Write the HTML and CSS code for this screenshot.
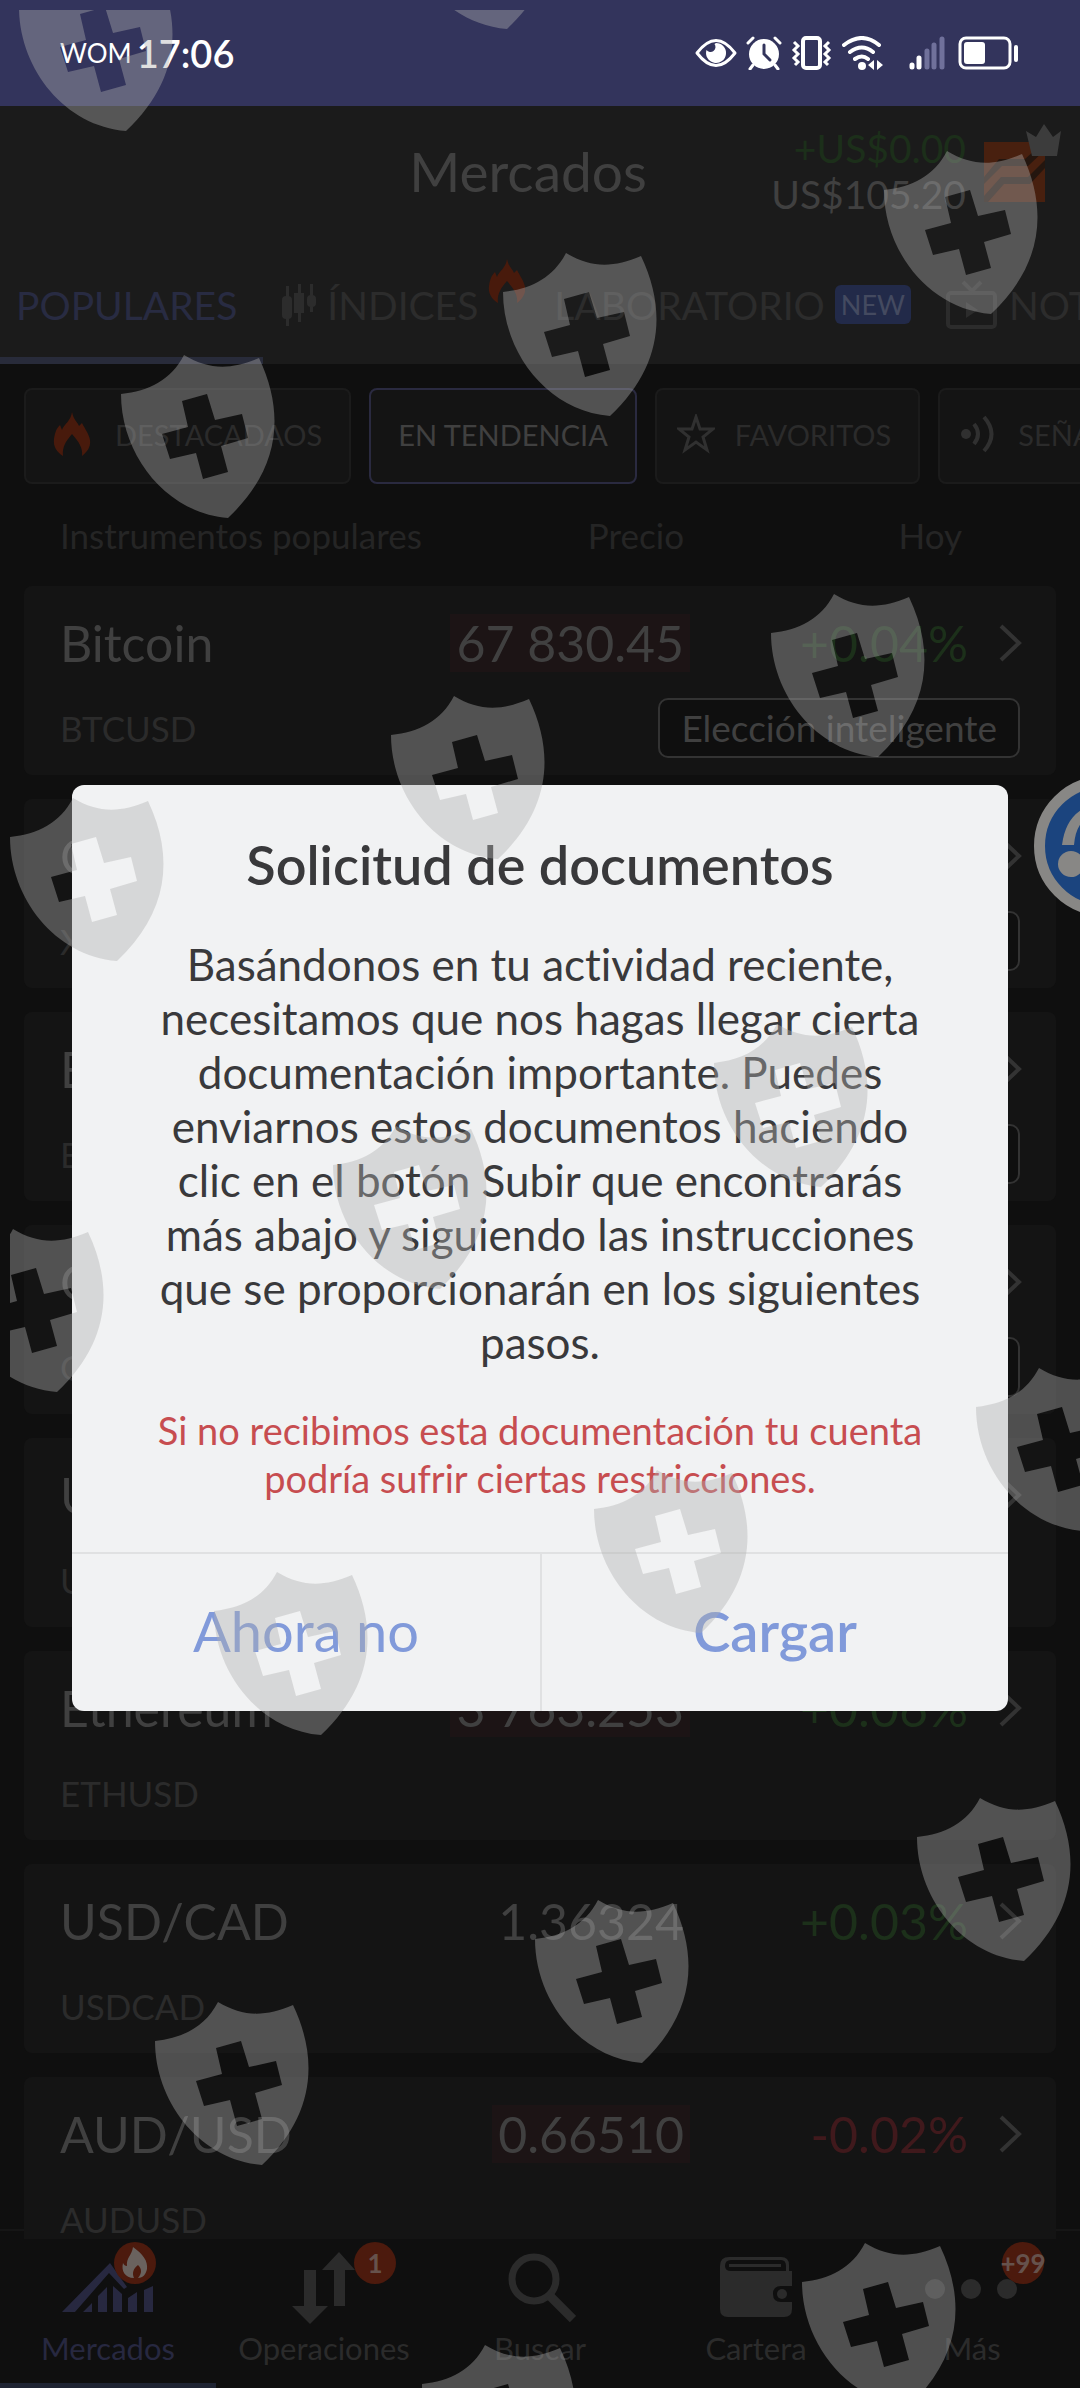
FILE: index.html
```html
<!DOCTYPE html>
<html lang="es">
<head>
    <meta charset="UTF-8">
    <meta name="viewport" content="width=device-width, initial-scale=1.0">
    <title>Mercados</title>
    <link rel="stylesheet" href="styles.css">
</head>
<body>
    <div class="status-bar">
        <span class="carrier">WOM</span>
        <span class="time">17:06</span>
        <div class="status-icons">
            <svg width="42" height="34" viewBox="0 0 42 34" fill="none" stroke="#fff" stroke-width="3">
                <path d="M2 17Q21 -8 40 17Q21 42 2 17Z" stroke-linejoin="round"/>
                <path d="M21 7a10 10 0 1 1-9.500 7a5 5 0 1 0 8-6z" fill="#fff" stroke="none"/>
            </svg>
            <svg width="36" height="34" viewBox="0 0 36 34" fill="none" stroke="#fff" stroke-width="3" stroke-linecap="round">
                <circle cx="18" cy="18" r="15" fill="#fff" stroke="none"/>
                <path d="M2 7l5-5M34 7l-5-5M7 29l-3 4M29 29l3 4"/>
                <path d="M18 9v9l6 6" stroke="#33345c"/>
            </svg>
            <svg width="42" height="34" viewBox="0 0 42 34" fill="none" stroke="#fff" stroke-width="3">
                <rect x="12" y="2" width="17" height="30" rx="3" stroke-width="4"/>
                <path d="M3 6l4 4-4 4 4 4-4 4 4 4-3 3M38 6l-4 4 4 4-4 4 4 4-4 4 3 3"/>
            </svg>
            <svg width="42" height="34" viewBox="0 0 42 34" fill="none" stroke="#fff" stroke-width="4" stroke-linecap="round">
                <path d="M2 9Q20 -5 37 9M8 16Q20 7 31 16M13 23Q20 18 26 23"/>
                <circle cx="20" cy="30" r="4" fill="#fff" stroke="none"/>
                <path d="M32 24v10l-6-5zM35 24l6 5-6 5z" fill="#fff" stroke="none"/>
            </svg>
            <svg class="signal" width="36" height="34" viewBox="0 0 36 34" fill="none" stroke="#fff" stroke-width="5" stroke-linecap="round">
                <path d="M3 29v2M10 22v9"/>
                <path d="M18 15v16M25 9v22M33 3v28" stroke="#70719b"/>
            </svg>
            <svg width="60" height="34" viewBox="0 0 60 34">
                <rect x="2" y="2" width="50" height="30" rx="6" fill="none" stroke="#fff" stroke-width="3"/>
                <rect x="6" y="6" width="21" height="22" rx="3" fill="#fff"/>
                <rect x="56" y="9" width="4" height="17" rx="2" fill="#fff"/>
            </svg>
        </div>
    </div>

    <header>
        <div class="top">
            <h1>Mercados</h1>
            <div class="account">
                <div>
                    <p class="profit">+US$0.00</p>
                    <p class="balance">US$105.20</p>
                </div>
                <svg class="logo" width="72" height="80" viewBox="0 0 72 80">
                    <path d="M0 18h61v60H0z" fill="#48200f"/>
                    <path d="M0 53l15-18h26l20-18v9L44 42H18L0 60zM0 72l17-19h27l17-17v8L46 60H20L4 78H0z" fill="#24160f"/>
                    <path d="M42 7l10 6 8-13 9 13 8-6-4 25H48z" fill="#3c3c3c"/>
                </svg>
            </div>
        </div>
        <nav class="tabs">
            <a href="#" class="tab active">POPULARES</a>
            <a href="#" class="tab">
                <svg width="36" height="42" viewBox="0 0 36 42" fill="#2c2c2c">
                    <path d="M5 2h3v40H5zM17 0h3v38h-3zM29 0h3v28h-3z"/>
                    <rect x="1" y="12" width="10" height="23" rx="4"/><rect x="13" y="9" width="10" height="20"/><rect x="26" y="11" width="9" height="12" rx="4"/>
                </svg>
                ÍNDICES
                <svg class="tab-fire" width="38" height="46" viewBox="0 0 38 46"><use href="#fire"/></svg>
            </a>
            <a href="#" class="tab">LABORATORIO <span class="new">NEW</span></a>
            <a href="#" class="tab">
                <svg width="54" height="50" viewBox="0 0 54 50" fill="none" stroke="#2c2c2c" stroke-width="4">
                    <rect x="3" y="13" width="47" height="34" rx="3"/>
                    <path d="M18 2l9 9 9-9"/><path d="M21 22l12 8-12 8z" fill="#2c2c2c" stroke="none"/>
                </svg>
                NOTICIAS
            </a>
        </nav>
    </header>

    <main>
        <div class="chips">
            <button class="chip">
                <svg width="38" height="46" viewBox="0 0 38 46"><use href="#fire"/></svg>
                DESTACADAOS
            </button>
            <button class="chip selected">EN TENDENCIA</button>
            <button class="chip outline">
                <svg width="38" height="40" viewBox="0 0 38 40" fill="none" stroke="#303030" stroke-width="3">
                    <path d="M19 3l4 12h13l-10 8 4 13-11-8-11 8 4-13-10-8h13z"/>
                </svg>
                FAVORITOS
            </button>
            <button class="chip outline">
                <svg width="38" height="40" viewBox="0 0 38 40" fill="none" stroke="#303030" stroke-width="4">
                    <circle cx="6" cy="20" r="5" fill="#303030" stroke="none"/>
                    <path d="M14 10q8 10 0 20M24 3q15 17 0 34"/>
                </svg>
                SEÑALES
            </button>
        </div>

        <table class="instruments">
            <thead>
                <tr><th class="col-name">Instrumentos populares</th><th>Precio</th><th>Hoy</th></tr>
            </thead>
            <tbody>
                <tr>
                    <td class="name">Bitcoin</td><td class="price"><span class="down">67 830.45</span></td><td class="change up">+0.04%</td>
                    <td class="arrow"><svg width="26" height="38"><use href="#chevron"/></svg></td>
                    <td class="code">BTCUSD</td><td class="pick"><span>Elección inteligente</span></td>
                </tr>
                <tr>
                    <td class="name">Oro</td><td class="price"></td><td class="change"></td>
                    <td class="arrow"><svg width="26" height="38"><use href="#chevron"/></svg></td>
                    <td class="code">XAUUSD</td><td class="pick"><span>Elección inteligente</span></td>
                </tr>
                <tr>
                    <td class="name">EUR/USD</td><td class="price"></td><td class="change"></td>
                    <td class="arrow"><svg width="26" height="38"><use href="#chevron"/></svg></td>
                    <td class="code">EURUSD</td><td class="pick"><span>Elección inteligente</span></td>
                </tr>
                <tr>
                    <td class="name">GBP/USD</td><td class="price"></td><td class="change"></td>
                    <td class="arrow"><svg width="26" height="38"><use href="#chevron"/></svg></td>
                    <td class="code">GBPUSD</td><td class="pick"><span>Elección inteligente</span></td>
                </tr>
                <tr>
                    <td class="name">USD/JPY</td><td class="price"></td><td class="change"></td>
                    <td class="arrow"><svg width="26" height="38"><use href="#chevron"/></svg></td>
                    <td class="code">USDJPY</td>
                </tr>
                <tr>
                    <td class="name">Ethereum</td><td class="price"><span class="down">3 763.253</span></td><td class="change up">+0.06%</td>
                    <td class="arrow"><svg width="26" height="38"><use href="#chevron"/></svg></td>
                    <td class="code">ETHUSD</td>
                </tr>
                <tr>
                    <td class="name">USD/CAD</td><td class="price"><span>1.36324</span></td><td class="change up">+0.03%</td>
                    <td class="arrow"><svg width="26" height="38"><use href="#chevron"/></svg></td>
                    <td class="code">USDCAD</td>
                </tr>
                <tr>
                    <td class="name">AUD/USD</td><td class="price"><span class="down">0.66510</span></td><td class="change loss">-0.02%</td>
                    <td class="arrow"><svg width="26" height="38"><use href="#chevron"/></svg></td>
                    <td class="code">AUDUSD</td>
                </tr>
            </tbody>
        </table>
    </main>

    <nav class="bottom-nav">
        <a href="#" class="active">
            <svg width="92" height="72" viewBox="0 0 92 72" fill="#272840">
                <path d="M0 60L48 11l17 24-3 2-15-16L13 60zM21 60l9-9v9zM36 60V44l9-9v25zM51 60V34l9 8v18zM66 60V46l9-6v20zM82 60V38l9-4v26z"/>
            </svg>
            Mercados
            <span class="badge hot"><svg width="28" height="34" viewBox="0 0 28 34" fill="#6a625e">
                <path d="M12 1c10 7 15 14 14 22-1 5-4 9-9 9 4-5 4-9 0-13-5 4-6 8-4 13C4 32 0 25 2 17c1 2 2 3 4 3C5 12 11 9 12 1z"/>
            </svg></span>
        </a>
        <a href="#">
            <svg width="72" height="72" viewBox="0 0 72 72" fill="#2b2b2b">
                <path d="M16 18h12v36h12L22 72 4 54h12zM46 54V18H34L51 0l16 18H57v36z"/>
            </svg>
            Operaciones
            <span class="badge">1</span>
        </a>
        <a href="#">
            <svg width="72" height="72" viewBox="0 0 72 72" fill="none" stroke="#2b2b2b" stroke-width="7">
                <circle cx="30" cy="27" r="22"/><path d="M45 43l24 24" stroke-width="9"/>
            </svg>
            Buscar
        </a>
        <a href="#">
            <svg width="72" height="72" viewBox="0 0 72 72" fill="#2b2b2b">
                <path d="M9 5h52q8 0 8 8v6h-3v-5q0-6-5-6H11q-6 0-6 6 0 5 6 5h61v15H61q-8 0-8 8t8 8h11v7q0 8-8 8H8q-8 0-8-8V14q0-9 9-9z"/>
                <path d="M9 12h52v3H9z"/><circle cx="62" cy="42" r="5"/>
            </svg>
            Cartera
        </a>
        <a href="#">
            <svg width="96" height="72" viewBox="0 0 96 72" fill="#2b2b2b">
                <circle cx="11" cy="37" r="10"/><circle cx="47" cy="37" r="10"/><circle cx="83" cy="37" r="10"/>
            </svg>
            Más
            <span class="badge">+99</span>
        </a>
    </nav>

    <button class="support" aria-label="Soporte">
        <svg width="118" height="118" viewBox="0 0 118 118" fill="#888785">
            <path d="M17 58q4-32 30-40v10Q31 34 29 58z"/>
            <circle cx="26" cy="77" r="13"/><path d="M36 88q8 14 26 16v-9q-12-2-18-13z"/>
        </svg>
    </button>

    <div class="overlay">
        <div class="dialog" role="dialog" aria-labelledby="dialog-title">
            <div class="dialog-body">
                <h2 id="dialog-title">Solicitud de documentos</h2>
                <p class="message">Basándonos en tu actividad reciente,<br>necesitamos que nos hagas llegar cierta<br>documentación importante. Puedes<br>enviarnos estos documentos haciendo<br>clic en el botón Subir que encontrarás<br>más abajo y siguiendo las instrucciones<br>que se proporcionarán en los siguientes<br>pasos.</p>
                <p class="warning">Si no recibimos esta documentación tu cuenta<br>podría sufrir ciertas restricciones.</p>
            </div>
            <div class="dialog-actions">
                <button>Ahora no</button>
                <button class="primary">Cargar</button>
            </div>
        </div>
    </div>

    <!-- shields scattered over the whole screen -->
    <svg class="shields" aria-hidden="true">
        <defs>
            <path id="shield" fill-rule="evenodd" d="M0 39C28 36 50 25 63 0C88 15 110 15 138 3C165 60 158 115 107 163C45 158 0 100 0 39ZM61 46L86 39L94 65L121 59L127 83L100 91L107 117L82 124L75 98L49 104L41 79L67 72Z"/>
            <path id="fire" fill="#481a0c" d="M19 1c2 9 5 9 7 14l3-3c3 6 7 11 8 17 1 7-3 12-8 16 1-8-3-14-10-22-7 8-10 14-9 22C4 41 0 36 1 28c1-6 2-10 6-14l2 5c2-6 9-9 10-18z"/>
            <path id="chevron" fill="none" stroke="#333" stroke-width="4" d="M3 2l18 17L3 36"/>
            <clipPath id="margin"><rect x="10" y="10" width="100%" height="100%"/></clipPath>
        </defs>
        <g clip-path="url(#margin)" fill="#b0b0b0" fill-opacity="0.4">
            <use href="#shield" x="19" y="-32"/><use href="#shield" x="400" y="-134"/>
            <use href="#shield" x="884" y="151"/><use href="#shield" x="503" y="253"/><use href="#shield" x="121" y="355"/>
            <use href="#shield" x="771" y="594"/><use href="#shield" x="391" y="696"/><use href="#shield" x="10" y="798"/>
            <use href="#shield" x="714" y="1024"/><use href="#shield" x="333" y="1126"/><use href="#shield" x="-50" y="1229"/>
            <use href="#shield" x="976" y="1368"/><use href="#shield" x="594" y="1470"/><use href="#shield" x="214" y="1572"/>
            <use href="#shield" x="917" y="1798"/><use href="#shield" x="535" y="1900"/><use href="#shield" x="155" y="2002"/>
            <use href="#shield" x="802" y="2243"/><use href="#shield" x="422" y="2345"/>
        </g>
    </svg>
</body>
</html>
```
FILE: styles.css
```css
* {
    margin: 0;
    padding: 0;
    box-sizing: border-box;
}

body {
    height: 100vh;
    display: flex;
    flex-direction: column;
    position: relative;
    overflow: hidden;
    background: #0f0f0f;
    color: #404040;
    font-family: Lato, "Open Sans", sans-serif;
    font-variant-ligatures: none;
}

a {
    color: inherit;
    text-decoration: none;
}

button {
    border: none;
    background: none;
    color: inherit;
    font-family: inherit;
}

svg {
    flex: none;
}

/* phone status bar */
.status-bar {
    flex: none;
    height: 106px;
    padding: 0 62px 0 60px;
    display: flex;
    align-items: center;
    gap: 5px;
    background: #33345c;
    color: #fff;
}

.carrier {
    font-size: 26px;
}

.time {
    font-size: 38px;
    font-weight: 600;
}

.status-icons {
    margin-left: auto;
    display: flex;
    gap: 9px;
}

.signal {
    margin: 0 4px 0 16px;
}

/* header */
header {
    flex: none;
    background: #1b1b1b;
}

.top {
    height: 142px;
    padding: 0 24px 12px 0;
    display: grid;
    grid-template-columns: 1fr auto 1fr;
    align-items: center;
}

.top h1 {
    grid-column: 2;
    font-size: 55px;
    font-weight: 400;
}

.account {
    display: flex;
    justify-content: flex-end;
    align-items: center;
    gap: 18px;
    text-align: right;
    font-size: 39px;
    line-height: 46px;
}

.profit {
    color: #1c2f1a;
}

.logo {
    overflow: visible;
    margin-bottom: 14px;
}

.tabs {
    height: 116px;
    display: flex;
    overflow: hidden;
    color: #2c2c2c;
    font-size: 39px;
    white-space: nowrap;
}

.tab {
    flex: none;
    display: flex;
    align-items: center;
    gap: 10px;
    padding: 4px 16px 0 18px;
    border-bottom: 7px solid transparent;
}

.tab.active {
    padding: 4px 26px 0 16px;
    color: #282b42;
    border-color: #282b3a;
}

.tab-fire {
    align-self: flex-start;
    margin: 6px -6px 0 0;
}

.new {
    padding: 0 6px;
    border-radius: 6px;
    background: #222a49;
    color: #444a60;
    font-size: 27px;
    line-height: 39px;
}

/* filters */
main {
    flex: 1;
    min-height: 0;
    overflow: hidden;
    position: relative;
    z-index: 1;
}

.chips {
    display: flex;
    gap: 18px;
    padding: 24px 24px 0;
}

.chip {
    flex: none;
    height: 96px;
    padding: 0 27px 4px;
    display: flex;
    align-items: center;
    gap: 24px;
    border: 2px solid #1b1b1b;
    border-radius: 8px;
    background: #141414;
    color: #2b2b2b;
    font-size: 29px;
}

.chip.outline {
    gap: 20px;
    padding-left: 20px;
}

.chip.selected {
    border-color: #2a2a40;
    color: #404040;
}

/* instruments */
.instruments {
    display: block;
    padding: 0 24px;
}

.instruments thead {
    display: block;
}

.instruments tbody {
    display: grid;
    gap: 24px;
}

.instruments tr {
    display: grid;
    grid-template-columns: minmax(0, 300fr) minmax(0, 330fr) minmax(0, 278fr) minmax(0, 52fr);
    padding: 0 36px;
}

.instruments thead tr {
    height: 102px;
    align-items: center;
    color: #252525;
    font-size: 35px;
}

.instruments th {
    font-weight: 400;
    text-align: right;
    white-space: nowrap;
    padding-right: 6px;
}

.instruments .col-name {
    text-align: left;
}

.instruments tbody tr {
    grid-template-rows: 58px 60px;
    row-gap: 26px;
    align-items: center;
    padding: 28px 36px 17px;
    border-radius: 8px;
    background: #141414;
    font-size: 50px;
}

.name,
.price,
.change,
.arrow,
.pick {
    white-space: nowrap;
}

.price,
.change,
.arrow,
.pick {
    text-align: right;
}

.price span {
    display: inline-block;
    padding: 0 6px;
    line-height: 58px;
}

.price .down {
    background: #1c1415;
}

.up {
    color: #1c301a;
}

.loss {
    color: #40191c;
}

.arrow svg {
    display: block;
    margin: 0 -4px 0 auto;
}

.code {
    color: #2b2b2b;
    font-size: 35px;
}

.pick {
    grid-column: 2 / 5;
    font-size: 37px;
}

.pick span {
    display: inline-block;
    padding: 0 21px;
    border: 2px solid #333;
    border-radius: 10px;
    background: #0f0f0f;
    line-height: 56px;
    vertical-align: middle;
}

/* bottom navigation */
.bottom-nav {
    flex: none;
    height: 149px;
    display: grid;
    grid-template-columns: repeat(5, 1fr);
    position: relative;
    color: #2b2b2b;
    font-size: 31px;
    line-height: 40px;
}

.bottom-nav::before {
    content: '';
    position: absolute;
    top: -10px;
    left: 0;
    width: 100%;
    height: 2px;
    background: #161616;
}

.bottom-nav a {
    position: relative;
    display: flex;
    flex-direction: column;
    align-items: center;
    gap: 4px;
    padding-top: 13px;
    border-bottom: 5px solid transparent;
}

.bottom-nav .active {
    color: #272840;
    border-color: #1f2433;
}

.badge {
    position: absolute;
    top: 3px;
    left: calc(50% + 30px);
    width: 42px;
    height: 42px;
    display: flex;
    justify-content: center;
    align-items: center;
    border-radius: 50%;
    background: #4c1a0d;
    color: #66524c;
    font-size: 26px;
    font-weight: 700;
}

.badge.hot {
    left: calc(50% + 6px);
}

.support {
    position: absolute;
    top: 776px;
    right: -94px;
    width: 140px;
    height: 140px;
    z-index: 2;
    border: 11px solid #888785;
    border-radius: 50%;
    background: #1b447e;
}

/* dialog */
.overlay {
    position: absolute;
    inset: 0;
    z-index: 3;
    display: flex;
    justify-content: center;
    align-items: center;
    padding: 107px 72px 0;
}

.dialog {
    width: 100%;
    border-radius: 12px;
    background: #f1f2f3;
    color: #39393b;
    text-align: center;
    overflow: hidden;
}

.dialog-body {
    padding: 50px 24px 50px;
}

.dialog h2 {
    font-size: 54px;
    font-weight: 600;
    line-height: 60px;
    margin-bottom: 42px;
}

.message {
    font-size: 44px;
    line-height: 54px;
    margin-bottom: 37px;
}

.warning {
    color: #c74d50;
    font-size: 38px;
    line-height: 48px;
}

.dialog-actions {
    display: grid;
    grid-template-columns: 1fr 1fr;
    border-top: 2px solid #e0e1e2;
}

.dialog-actions button {
    height: 157px;
    padding-bottom: 4px;
    color: #819ada;
    font-size: 56px;
}

.dialog-actions .primary {
    border-left: 2px solid #e0e1e2;
    font-weight: 600;
}

.shields {
    position: absolute;
    top: 0;
    left: 0;
    width: 100%;
    height: 100%;
    z-index: 4;
    pointer-events: none;
}
```
